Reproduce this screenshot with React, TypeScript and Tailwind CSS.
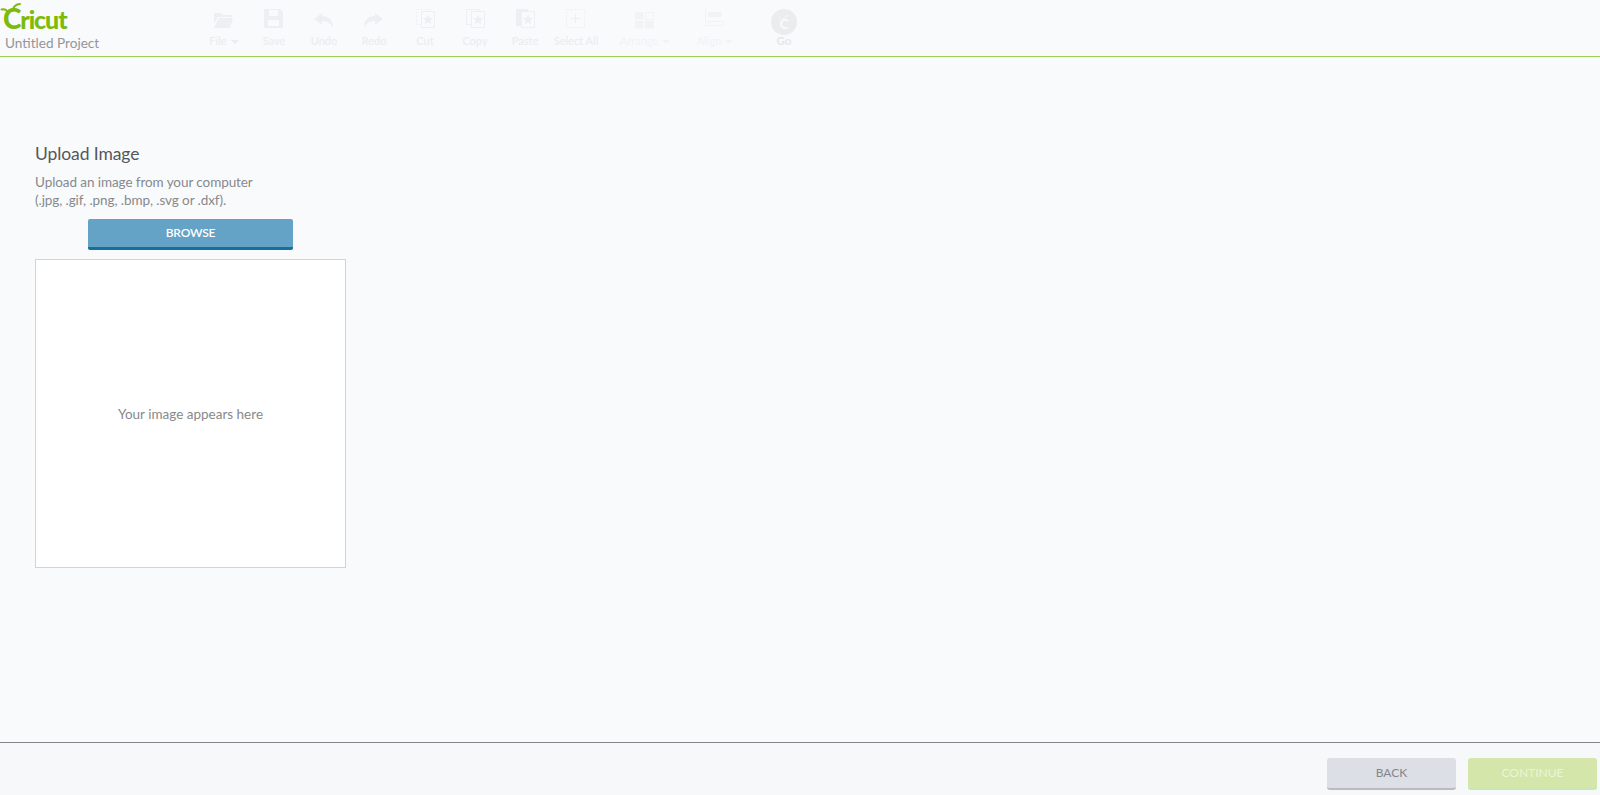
import React from "react";

const ic = "#eeeff2";
const ic2 = "#f2f3f5";

function Star({ x, y }: { x: number; y: number }) {
  return <path transform={`translate(${x} ${y})`} d="M0-5 1.500-1.700 5-1.300 2.400 1 3.200 4.700 0 2.700-3.200 4.700-2.400 1-5-1.300-1.500-1.700Z" fill={ic} />;
}

function Tool({ label, w, caret, faint, children }: { label: string; w: string; caret?: boolean; faint?: boolean; children: React.ReactNode }) {
  return (
    <div className={`flex flex-col items-center ${w}`}>
      <svg width="40" height="32" viewBox="0 0 40 32" className="shrink-0">{children}</svg>
      <div className={`flex items-center gap-1 text-[11px] leading-[14px] font-medium whitespace-nowrap ${faint ? "text-[#f2f3f5]" : "text-[#ebecef]"}`}>
        {label}
        {caret && <span className={`w-0 h-0 border-x-[4px] border-x-transparent border-t-[4px] mt-0.5 ${faint ? "border-t-[#f2f3f5]" : "border-t-[#ebecef]"}`} />}
      </div>
    </div>
  );
}

export default function App() {
  return (
    <div className="w-[1600px] h-[795px] flex flex-col overflow-hidden bg-[#f9fafc] font-['Lato','Open_Sans',sans-serif]">
      <header className="h-[57px] shrink-0 border-b border-[#9ccf55] flex">
        <div className="w-[205px] shrink-0 pl-[5px] flex flex-col">
          <div className="relative h-[31px]">
            <span className="absolute left-[-2px] top-[3px] text-[25px] leading-[30px] font-black tracking-[-1.1px] text-[#7dbb0a] whitespace-nowrap">
              <span className="text-[28px]">C</span>ricut
            </span>
            <svg className="absolute left-[-5px] top-0" width="24" height="16" viewBox="0 0 24 16">
              <path d="M1.500 9.500c3-1 5 0 6.500 3M9 12c3-1 4-4 6-6 1-1 3-2 5-2" fill="none" stroke="#7dbb0a" strokeWidth="2" strokeLinecap="round" />
            </svg>
          </div>
          <div className="text-[13.6px] leading-[18px] mt-[3px] text-[#939598] whitespace-nowrap">Untitled Project</div>
        </div>
        <div className="flex items-start pt-[2px]">
          <Tool label="File" w="w-[36px] ml-[1px]" caret>
            <path d="M10 11h7l2 2h9v2H14l-4 7Z" fill={ic} />
            <path d="M15 16h14l-3 10H10Z" fill={ic} />
          </Tool>
          <div className="w-[14px]" />
          <Tool label="Save" w="w-[36px]">
            <path fillRule="evenodd" d="M10 7h16l3 3v16H10ZM15 8v6h9V8ZM14 18v6h11v-6Z" fill={ic} />
          </Tool>
          <div className="w-[14px]" />
          <Tool label="Undo" w="w-[36px]">
            <path d="M18 11 10 17l8 6v-4c5 0 9 2 11 7 0-8-4-12-11-12Z" fill={ic} />
          </Tool>
          <div className="w-[14px]" />
          <Tool label="Redo" w="w-[36px]">
            <path d="M21 11 29 17l-8 6v-4c-5 0-9 2-11 7 0-8 4-12 11-12Z" fill={ic} />
          </Tool>
          <div className="w-[15px]" />
          <Tool label="Cut" w="w-[36px]">
            <rect x="11.500" y="7.500" width="13" height="15" fill="none" stroke={ic} strokeDasharray="2 2" />
            <rect x="16.500" y="9.500" width="13" height="16" fill="#f9fafc" stroke={ic} />
            <Star x={23} y={17.500} />
          </Tool>
          <div className="w-[14px]" />
          <Tool label="Copy" w="w-[36px]">
            <rect x="11.500" y="7.500" width="13" height="15" fill="none" stroke={ic} />
            <rect x="16.500" y="9.500" width="13" height="16" fill="#f9fafc" stroke={ic} />
            <Star x={23} y={17.500} />
          </Tool>
          <div className="w-[14px]" />
          <Tool label="Paste" w="w-[36px]">
            <rect x="11" y="7" width="12" height="17" fill={ic} />
            <rect x="16.500" y="9.500" width="13" height="16" fill="#f9fafc" stroke={ic} />
            <Star x={23} y={17.500} />
          </Tool>
          <div className="w-[15px]" />
          <Tool label="Select All" w="w-[36px]">
            <rect x="10.500" y="7.500" width="18" height="18" fill="none" stroke={ic} strokeDasharray="2 2" />
            <path d="M19.500 12v9M15 16.500h9" stroke={ic} />
          </Tool>
          <div className="w-[16px]" />
          <Tool label="Arrange" w="w-[70px]" caret faint>
            <rect x="10" y="10" width="8.500" height="7.500" fill={ic2} />
            <rect x="20.500" y="10.500" width="8" height="7" fill="none" stroke={ic2} />
            <rect x="10" y="19" width="8.500" height="7.500" fill={ic2} />
            <rect x="20" y="19" width="9" height="7.500" fill={ic2} />
          </Tool>
          <Tool label="Align" w="w-[70px]" caret faint>
            <path d="M10.500 7v18" stroke={ic2} />
            <rect x="13" y="10" width="14" height="5" fill={ic2} />
            <rect x="13.500" y="19.500" width="15" height="4" fill="none" stroke={ic2} />
          </Tool>
          <div className="w-[14px]" />
          <div className="flex flex-col items-center w-[40px]">
            <div className="relative mt-[7px] w-[26px] h-[26px] rounded-full bg-[#ebecee] flex items-center justify-center text-[14px] leading-none font-black text-[#f9fafc] pt-[3px]">
              C
              <svg className="absolute left-[7px] top-[4px]" width="14" height="8" viewBox="0 0 14 8">
                <path d="M1 4c1 0 2 .5 3 2M5 6c2-1 3-3 5-4" fill="none" stroke="#f9fafc" strokeWidth="1" />
              </svg>
            </div>
            <div className="text-[11.500px] leading-[14px] font-bold text-[#e6e7e9] -mt-[1px]">Go</div>
          </div>
        </div>
      </header>

      <main className="flex-1 pl-[35px] pt-[85px]">
        <h1 className="text-[17.500px] leading-[24px] tracking-[-0.1px] text-[#55575a]">Upload Image</h1>
        <p className="mt-[7px] text-[13.500px] leading-[18px] tracking-[-0.08px] text-[#87898c]">
          Upload an image from your computer
          <br />
          (.jpg, .gif, .png, .bmp, .svg or .dxf).
        </p>
        <div className="w-[311px] mt-[10px] flex justify-center">
          <button className="w-[205px] h-[31px] rounded-[2px] bg-[#64a3c6] border-b-[3px] border-[#176f9e] text-white text-[12px] font-semibold tracking-[-0.2px]">BROWSE</button>
        </div>
        <div className="w-[311px] h-[309px] mt-[9px] bg-white border border-[#d2d3d5] flex items-center justify-center pt-[2px] text-[13.500px] text-[#87898c]">
          Your image appears here
        </div>
      </main>

      <footer className="h-[53px] shrink-0 border-t border-[#85878f] bg-[#f7f8fa] flex justify-end gap-3 pt-[15px] pr-[3px]">
        <button className="w-[129px] h-[32px] rounded-[3px] bg-[#dcdfe6] border-b-[2px] border-[#b9bbc1] text-[12px] text-[#85868a]">BACK</button>
        <button className="w-[129px] h-[32px] rounded-[3px] bg-[#d5e6ab] border-b-[2px] border-[#c9e6b5] text-[12px] text-[#ecf4d6]">CONTINUE</button>
      </footer>
    </div>
  );
}
